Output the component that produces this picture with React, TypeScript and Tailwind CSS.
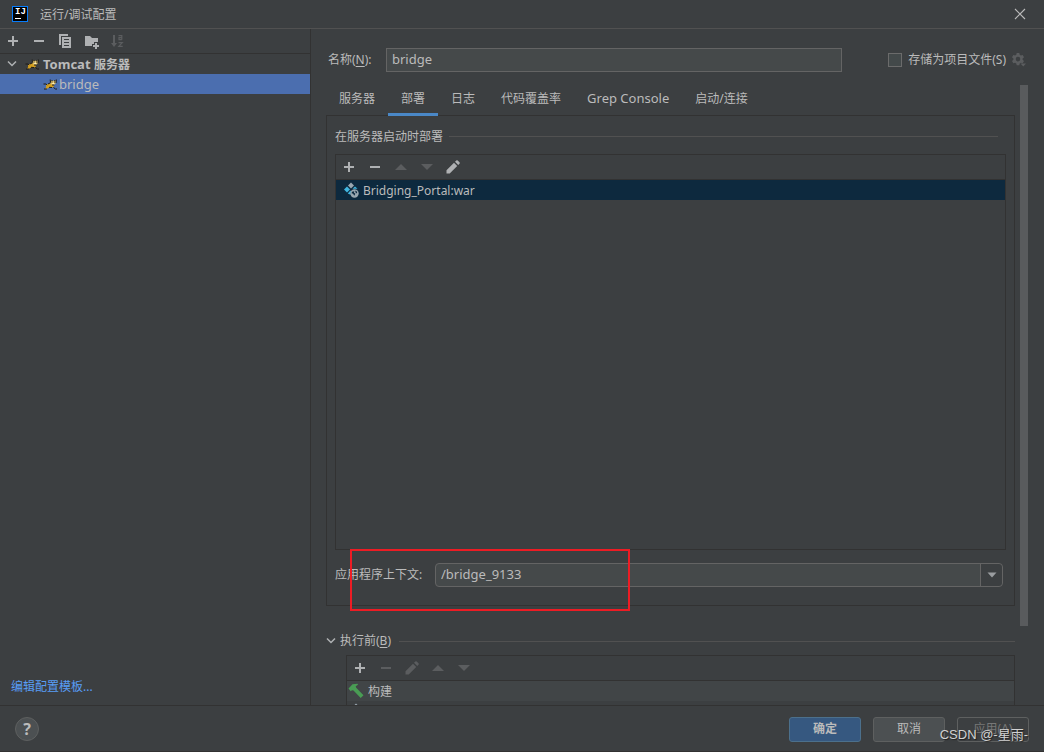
import type { ReactNode } from "react";

type IconProps = { className?: string };

function Svg({ children, className = "", size = 16 }: { children: ReactNode; className?: string; size?: number }) {
  return (
    <svg
      width={size}
      height={size}
      viewBox={`0 0 ${size} ${size}`}
      fill="currentColor"
      aria-hidden="true"
      className={`shrink-0 ${className}`}
    >
      {children}
    </svg>
  );
}

const PlusIcon = ({ className }: IconProps) => (
  <Svg className={className}>
    <path d="M7 3h2v4h4v2H9v4H7V9H3V7h4z" />
  </Svg>
);

const MinusIcon = ({ className }: IconProps) => (
  <Svg className={className}>
    <path d="M3 7h10v2H3z" />
  </Svg>
);

const CopyIcon = ({ className }: IconProps) => (
  <Svg className={className}>
    <path d="M2 1h9v2H4v9H2z" />
    <path fillRule="evenodd" d="M5 4h9v11H5zM7 6v1h5V6zM7 9v1h5V9zM7 12v1h5v-1z" />
  </Svg>
);

const FolderPlusIcon = ({ className }: IconProps) => (
  <Svg className={className}>
    <path d="M2 3h5l2 2h6v4h-4v2H9v2H2z" />
    <path d="M12 10h2v2h2v2h-2v2h-2v-2h-2v-2h2z" />
  </Svg>
);

const SortIcon = ({ className }: IconProps) => (
  <Svg className={className}>
    <path d="M4 2h2v8h2l-3 4-3-4h2z" />
    <path fill="none" stroke="currentColor" strokeWidth="1.2" d="M9.5 2.6h3.3v4.2M12.8 4.6H10v2.1h2.8M9.5 9.6h3.8L9.8 13.4h3.9" />
  </Svg>
);

const UpIcon = ({ className }: IconProps) => (
  <Svg className={className}>
    <path d="M8 5l6 6H2z" />
  </Svg>
);

const DownIcon = ({ className }: IconProps) => (
  <Svg className={className}>
    <path d="M8 11l6-6H2z" />
  </Svg>
);

const PencilIcon = ({ className }: IconProps) => (
  <Svg className={className}>
    <path d="M1.5 14.5v-3.2L9 3.8 12.2 7l-7.5 7.5zM10 2.8l1.3-1.3q.7-.7 1.4 0l1.8 1.8q.7.7 0 1.4L13.2 6z" />
  </Svg>
);

const ChevronIcon = ({ className }: IconProps) => (
  <Svg className={className}>
    <path fill="none" stroke="currentColor" strokeWidth="1.5" d="M4 5.500l4 4 4-4" />
  </Svg>
);

const HammerIcon = ({ className }: IconProps) => (
  <Svg className={className}>
    <path fill="#499c54" d="M0.500 5.500L4.500 1.200 9.500 0.800l.5.900-2.300 1.500.5 1.600L15.500 12.300l-2.800 2.800L5.500 7.600 4 7.200 2.700 8.300z" />
  </Svg>
);

const ArtifactIcon = ({ className }: IconProps) => (
  <Svg className={className}>
    <path fill="#9aa7b0" d="M8 0.500l3 3-3 3-3-3z" />
    <path fill="#40b6e0" d="M4 4.500l3 3-3 3-3-3z" />
    <path fill="#40b6e0" d="M7.500 8.500l.5 1-.5 3.200L4.800 11.500z" />
    <path fill="#40b6e0" d="M12 4.500l2.500 2.300H9.500z" />
    <circle cx="11.500" cy="11.500" r="4.200" fill="#9aa7b0" />
    <path fill="#0d293e" d="M9 9.700l2.300-.5-.4 1.600 1.500 1-1.200 1.900-1-1.900-1.600-.6zM12.700 8.600l1.500 1.300-.5 1.500-1.500-1.300z" />
  </Svg>
);

const TomcatIcon = ({ className }: IconProps) => (
  <Svg className={className}>
    <path fill="#d5a01f" d="M4 9L7.500 7.300l4 1.200.3 2.400-2.300.6-3 .3-1.500 1H2.500l1.700-1.600z" />
    <path fill="#e5c56a" d="M8.500 4l1 .8h2.500l1.500-.8.400 3-1.800 2H10L8.300 7z" />
    <path fill="#fff2c0" d="M10.300 6.700h1.800v1.500h-1.800z" />
    <path
      fill="none"
      stroke="#1c1a16"
      strokeWidth="1"
      d="M8.200 3.500l.3 3.200M14.300 3.500L14 7M9.500 4.500h1M12.300 4.500h1M1.500 8h2.500l1.200 1M6 8l2-1M2 13h2.800M7 11.300l3 .2M10 9h2.300M11.500 11.500l2 1.500h1.500"
    />
    <path fill="#1c1a16" d="M9.500 5.500h1v1h-1zM12.100 5.500h1v1h-1z" />
  </Svg>
);

const GearIcon = ({ className }: IconProps) => (
  <Svg className={className}>
    <path
      fillRule="evenodd"
      d="M5.700 1h2.600l.4 1.800 1.200.7 1.800-.6L13 5.200l-1.400 1.200v1.400L13 9l-1.300 2.300-1.800-.6-1.200.7-.4 1.800H5.700l-.4-1.800-1.200-.7-1.800.6L1 9l1.400-1.200V6.400L1 5.200l1.300-2.300 1.800.6 1.200-.7zM7 4.800a2.300 2.300 0 1 0 0 4.600 2.300 2.300 0 0 0 0-4.600z"
    />
    <path d="M9.500 11.500h5.500l-2.750 3z" />
  </Svg>
);

const CloseIcon = ({ className }: IconProps) => (
  <Svg className={className}>
    <path fill="none" stroke="currentColor" strokeWidth="1.100" d="M3 3l10 10M13 3L3 13" />
  </Svg>
);

function AppLogo() {
  return (
    <span className="flex size-4 shrink-0 flex-col border border-[#087cfa] bg-black pt-px pl-0.5 font-['Liberation_Mono',monospace] text-[9px] leading-[9px] font-bold text-white">
      IJ
      <span className="mt-px h-px w-1.5 bg-white" />
    </span>
  );
}

function Tool({ label, disabled, children }: { label: string; disabled?: boolean; children: ReactNode }) {
  return (
    <button
      type="button"
      aria-label={label}
      disabled={disabled}
      className="flex size-4 shrink-0 items-center justify-center text-[#afb1b3] disabled:text-[#5b5d5f]"
    >
      {children}
    </button>
  );
}

const tabs = ["服务器", "部署", "日志", "代码覆盖率", "Grep Console", "启动/连接"];

function Sidebar() {
  return (
    <aside className="flex w-[311px] shrink-0 flex-col border-r border-[#323232]">
      <div className="flex h-[25px] shrink-0 items-center gap-2.5 border-b border-[#323232] px-[5px]">
        <Tool label="添加"><PlusIcon /></Tool>
        <Tool label="移除"><MinusIcon /></Tool>
        <Tool label="复制"><CopyIcon /></Tool>
        <Tool label="新建文件夹"><FolderPlusIcon /></Tool>
        <Tool label="排序" disabled><SortIcon /></Tool>
      </div>
      <ul className="flex-1 text-[13px]">
        <li className="flex h-5 items-center pl-1 font-bold">
          <ChevronIcon className="text-[#afb1b3]" />
          <TomcatIcon className="ml-1" />
          <span className="ml-[3px] pt-0.5">
            Tomcat <span className="text-xs">服务器</span>
          </span>
        </li>
        <li className="flex h-5 items-center bg-[#4b6eaf] pl-[42px]">
          <TomcatIcon />
          <span className="ml-px pt-0.5">bridge</span>
        </li>
      </ul>
      <a href="#templates" className="mb-2.5 ml-[11px] self-start leading-4 text-[#589df6]">
        编辑配置模板...
      </a>
    </aside>
  );
}

function NameRow() {
  return (
    <div className="flex h-[51px] shrink-0 items-center pt-2.5 pr-[17px] pl-[17px]">
      <label htmlFor="name" className="w-[58px] shrink-0">
        名称(<u className="underline-offset-2">N</u>):
      </label>
      <input
        id="name"
        defaultValue="bridge"
        className="h-6 min-w-0 flex-1 border border-[#646464] bg-[#45494a] px-[5px] pb-px text-[13px] outline-none"
      />
      <label className="ml-[46px] flex shrink-0 items-center gap-1.5 text-xs">
        <input type="checkbox" className="size-3.5 appearance-none border border-[#6b6b6b] bg-[#43494a] checked:bg-[#4a88c7]" />
        存储为项目文件(S)
      </label>
      <button type="button" aria-label="存储选项" disabled className="ml-[5px] text-[#5b5d5f]">
        <GearIcon />
      </button>
    </div>
  );
}

function DeploymentPanel() {
  return (
    <section className="flex min-h-0 flex-1 flex-col border border-t-0 border-[#323232] px-2 pb-[18px]">
      <div className="flex h-[38px] shrink-0 items-center gap-1.5 pt-[3px] pr-2">
        <h2>在服务器启动时部署</h2>
        <span className="h-px flex-1 bg-[#515151]" />
      </div>
      <div className="flex min-h-0 flex-1 flex-col border border-[#323232]">
        <div className="flex h-[25px] shrink-0 items-center gap-2.5 border-b border-[#323232] px-[5px]">
          <Tool label="添加部署"><PlusIcon /></Tool>
          <Tool label="移除部署"><MinusIcon /></Tool>
          <Tool label="上移" disabled><UpIcon /></Tool>
          <Tool label="下移" disabled><DownIcon /></Tool>
          <Tool label="编辑"><PencilIcon /></Tool>
        </div>
        <ul>
          <li className="flex h-5 items-center gap-1 bg-[#0d293e] pl-[7px]">
            <ArtifactIcon />
            <span className="pt-0.5">Bridging_Portal:war</span>
          </li>
        </ul>
      </div>
      <div className="relative mt-[13px] flex shrink-0 items-center pr-[3px]">
        <label htmlFor="context" className="w-[100px] shrink-0">
          应用程序上下文:
        </label>
        <div className="flex h-6 min-w-0 flex-1 rounded-sm border border-[#646464] bg-[#45494a]">
          <input
            id="context"
            defaultValue="/bridge_9133"
            className="min-w-0 flex-1 bg-transparent px-[5px] text-[13px] outline-none"
          />
          <button
            type="button"
            aria-label="选择上下文"
            className="flex w-[22px] items-center justify-center rounded-r-sm border-l border-[#646464] bg-[#3c3f41] text-[#9a9da0]"
          >
            <svg width="10" height="6" viewBox="0 0 10 6" fill="currentColor" aria-hidden="true">
              <path d="M0.500 0.500h9L5 5.500z" />
            </svg>
          </button>
        </div>
        <div className="pointer-events-none absolute -top-3.5 left-[15px] h-[62px] w-[280px] border-2 border-[#ed1c24]" />
      </div>
    </section>
  );
}

function BeforeLaunch() {
  return (
    <section className="h-[99px] shrink-0 overflow-hidden pt-[27px]">
      <div className="flex h-4 items-center">
        <button type="button" aria-label="折叠" className="-ml-[3px] text-[#afb1b3]">
          <ChevronIcon />
        </button>
        <h2 className="ml-px">
          执行前(<u className="underline-offset-2">B</u>)
        </h2>
        <span className="ml-2 h-px flex-1 bg-[#515151]" />
      </div>
      <div className="mt-1.5 ml-5 border border-[#323232]">
        <div className="flex h-[25px] items-center gap-2.5 border-b border-[#323232] px-[5px]">
          <Tool label="添加任务"><PlusIcon /></Tool>
          <Tool label="移除任务" disabled><MinusIcon /></Tool>
          <Tool label="编辑任务" disabled><PencilIcon /></Tool>
          <Tool label="上移任务" disabled><UpIcon /></Tool>
          <Tool label="下移任务" disabled><DownIcon /></Tool>
        </div>
        <ul>
          <li className="flex h-5 items-center gap-1 bg-[#414547] pl-px">
            <HammerIcon />
            <span className="pt-0.5">构建</span>
          </li>
          <li className="flex h-5 items-start pt-0.5 pl-px">
            <ArtifactIcon />
          </li>
        </ul>
      </div>
    </section>
  );
}

function Footer() {
  const base = "h-[25px] w-[72px] rounded-[3px] border text-xs";
  return (
    <footer className="relative flex h-[47px] shrink-0 items-center gap-3 border-y border-[#323232] pt-px pr-[15px] pl-[15px]">
      <button
        type="button"
        aria-label="帮助"
        className="mr-auto flex size-6 items-center justify-center rounded-full border border-[#5e6060] bg-[#4c5052] text-base font-bold text-[#bbbbbb]"
      >
        ?
      </button>
      <button type="button" className={`${base} border-[#4c708c] bg-[#365880] font-bold`}>确定</button>
      <button type="button" className={`${base} border-[#5e6060] bg-[#4c5052]`}>取消</button>
      <button type="button" disabled className={`${base} border-[#5e6060] text-[#777777]`}>应用(A)</button>
      <span className="absolute right-4 bottom-1.5 font-['Liberation_Sans','Noto_Sans_CJK_SC',sans-serif] text-[13px] leading-5 text-[#d2d2d2] [text-shadow:1px_1px_1px_#222]">
        CSDN @-星雨-
      </span>
    </footer>
  );
}

export default function App() {
  return (
    <div className="flex h-screen flex-col overflow-hidden bg-[#3c3f41] font-['Noto_Sans','Noto_Sans_CJK_SC',sans-serif] text-xs text-[#bbbbbb]">
      <header className="flex h-[29px] shrink-0 items-center border-b border-[#515151] pr-4 pl-3">
        <AppLogo />
        <h1 className="ml-3 flex-1 pt-0.5">运行/调试配置</h1>
        <button type="button" aria-label="关闭">
          <CloseIcon />
        </button>
      </header>
      <div className="flex min-h-0 flex-1">
        <Sidebar />
        <main className="flex min-w-0 flex-1 flex-col">
          <NameRow />
          <div className="flex min-h-0 flex-1 pr-4 pl-[15px]">
            <div className="flex min-w-0 flex-1 flex-col">
              <div role="tablist" className="flex h-9 shrink-0 border-b border-[#323232]">
                {tabs.map((tab) => (
                  <button
                    key={tab}
                    type="button"
                    role="tab"
                    aria-selected={tab === "部署"}
                    className={`-mb-px shrink-0 border-b-3 px-[13px] pt-1 ${
                      tab === "部署" ? "border-[#4a88c7]" : "border-transparent"
                    } ${tab === "Grep Console" ? "text-[13px]" : "text-xs"}`}
                  >
                    {tab}
                  </button>
                ))}
              </div>
              <DeploymentPanel />
              <BeforeLaunch />
            </div>
            <div className="mt-[5px] mb-[79px] ml-[5px] w-2 shrink-0 bg-[#595b5d]" />
          </div>
        </main>
      </div>
      <Footer />
    </div>
  );
}
